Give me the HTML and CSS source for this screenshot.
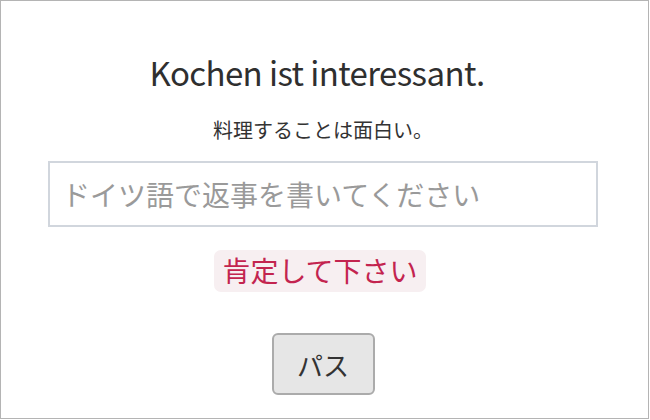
FILE: index.html
```html
<!DOCTYPE html>
<html lang="ja">
<head>
<meta charset="utf-8">
<title>Kochen</title>
<link rel="stylesheet" href="styles.css">
</head>
<body>
<div class="frame">
  <div class="card">
    <h1 class="title">Kochen ist interessant.</h1>
    <p class="subtitle">料理することは面白い。</p>
    <input class="answer" type="text" placeholder="ドイツ語で返事を書いてください">
    <div class="error">肯定して下さい</div>
    <button class="pass" type="button">パス</button>
  </div>
</div>
</body>
</html>
```

FILE: styles.css
```css
html, body {
  margin: 0;
  padding: 0;
  background: #ffffff;
}
body {
  font-family: "Noto Sans CJK JP", "Noto Sans", sans-serif;
  color: #333333;
}
.frame {
  box-sizing: border-box;
  width: 649px;
  height: 419px;
  border: 1px solid #b4b4b4;
  padding: 0 0 0 47px;
}
.card {
  width: 550px;
  display: flex;
  flex-direction: column;
  align-items: center;
}
.title {
  margin: 46px 12px 0 0;
  font-size: 33px;
  font-weight: 400;
  letter-spacing: -0.6px;
  line-height: 50px;
  color: #2f2f2f;
}
.subtitle {
  margin: 18px 0 0;
  font-size: 20px;
  line-height: 29px;
  color: #333333;
}
.answer {
  box-sizing: border-box;
  width: 550px;
  height: 66px;
  margin: 17px 0 0;
  padding: 0 12px;
  border: 2px solid #d1d6dd;
  border-radius: 0;
  font-family: "Noto Sans CJK JP", "Noto Sans", sans-serif;
  font-size: 28px;
  color: #333333;
  outline: none;
  background: #ffffff;
}
.answer::placeholder {
  color: #9a9a9a;
}
.error {
  box-sizing: border-box;
  margin: 23px 6px 0 0;
  height: 42px;
  padding: 0 8px;
  line-height: 40px;
  font-size: 28px;
  color: #c3244f;
  background: #f7eff1;
  border-radius: 7px;
}
.pass {
  box-sizing: border-box;
  margin: 41px 0 0;
  width: 103px;
  height: 62px;
  padding: 0;
  border: 2px solid #ababab;
  border-radius: 6px;
  background: #e6e6e6;
  font-family: "Noto Sans CJK JP", "Noto Sans", sans-serif;
  font-size: 26px;
  color: #333333;
}
```
